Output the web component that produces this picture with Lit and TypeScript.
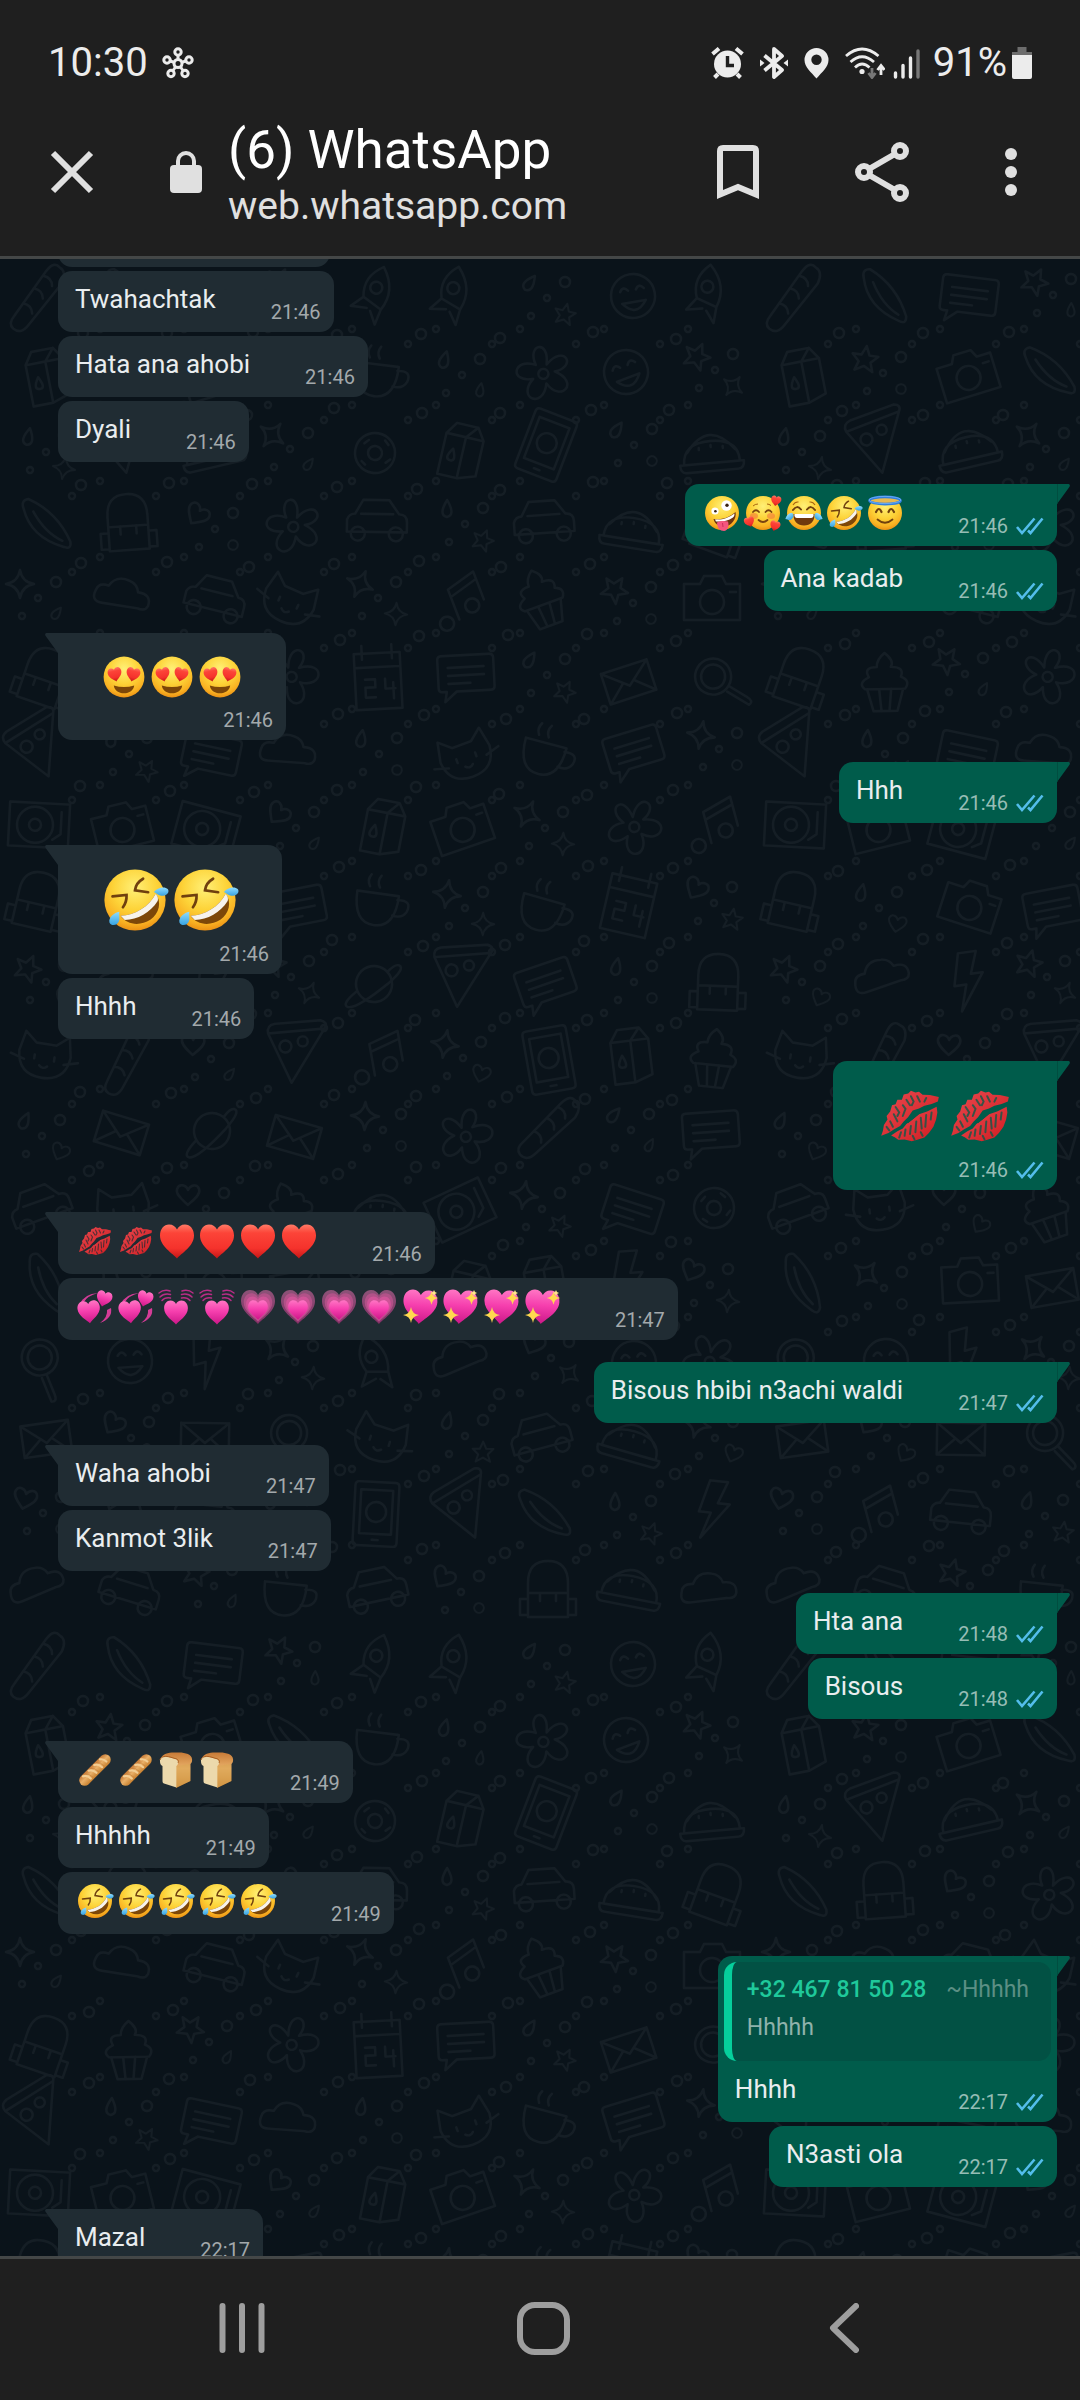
import { LitElement, html, svg, css, nothing } from "lit";
import { customElement, property } from "lit/decorators.js";
import { classMap } from "lit/directives/class-map.js";

type EmojiName =
  | "zany" | "adoring" | "joy" | "rofl" | "halo" | "heartEyes" | "kiss" | "heart"
  | "revolving" | "beating" | "growing" | "sparkling" | "baguette" | "bread";

interface Message {
  from: "in" | "out";
  time?: string;
  text?: string;
  emoji?: EmojiName[];
  size?: "medium" | "large";
  first?: boolean;
  quote?: { phone: string; name: string; text: string };
}

const times = (n: number, e: EmojiName): EmojiName[] => Array.from({ length: n }, () => e);

const MESSAGES: Message[] = [
  { from: "in" },
  { from: "in", text: "Twahachtak", time: "21:46" },
  { from: "in", text: "Hata ana ahobi", time: "21:46" },
  { from: "in", text: "Dyali", time: "21:46" },
  { from: "out", first: true, emoji: ["zany", "adoring", "joy", "rofl", "halo"], time: "21:46" },
  { from: "out", text: "Ana kadab", time: "21:46" },
  { from: "in", first: true, emoji: times(3, "heartEyes"), size: "medium", time: "21:46" },
  { from: "out", first: true, text: "Hhh", time: "21:46" },
  { from: "in", first: true, emoji: times(2, "rofl"), size: "large", time: "21:46" },
  { from: "in", text: "Hhhh", time: "21:46" },
  { from: "out", first: true, emoji: times(2, "kiss"), size: "large", time: "21:46" },
  { from: "in", first: true, emoji: [...times(2, "kiss"), ...times(4, "heart")], time: "21:46" },
  {
    from: "in",
    emoji: [...times(2, "revolving"), ...times(2, "beating"), ...times(4, "growing"), ...times(4, "sparkling")],
    time: "21:47",
  },
  { from: "out", first: true, text: "Bisous hbibi n3achi waldi", time: "21:47" },
  { from: "in", first: true, text: "Waha ahobi", time: "21:47" },
  { from: "in", text: "Kanmot 3lik", time: "21:47" },
  { from: "out", first: true, text: "Hta ana", time: "21:48" },
  { from: "out", text: "Bisous", time: "21:48" },
  { from: "in", first: true, emoji: ["baguette", "baguette", "bread", "bread"], time: "21:49" },
  { from: "in", text: "Hhhhh", time: "21:49" },
  { from: "in", emoji: times(5, "rofl"), time: "21:49" },
  {
    from: "out",
    first: true,
    quote: { phone: "+32 467 81 50 28", name: "~Hhhhh", text: "Hhhhh" },
    text: "Hhhh",
    time: "22:17",
  },
  { from: "out", text: "N3asti ola", time: "22:17" },
  { from: "in", first: true, text: "Mazal", time: "22:17" },
];

/* ---------- emoji artwork, all on a 40 x 40 box ---------- */

const HEART =
  "M0 17C-4 12-17 5-17-6C-17-12.500-13-17-8-17C-4-17-1.500-15 0-12C1.500-15 4-17 8-17C13-17 17-12.500 17-6C17 5 4 12 0 17Z";
const heartAt = (x: number, y: number, s: number, fill: string, rot = 0) =>
  svg`<path d=${HEART} fill=${fill} transform=${`translate(${x} ${y}) rotate(${rot}) scale(${s})`} />`;
const face = svg`<circle cx="20" cy="20" r="17" fill="url(#face)" />`;
const TEAR = "M-6-1C-2-4 3-5 6-2C7 1 4 4 0 4C-3 4-4 1-6-1Z";
const SPARK = "M0-8Q1-1 8 0Q1 1 0 8Q-1 1-8 0Q-1-1 0-8Z";

const EMOJI: Record<EmojiName, { label: string; art: unknown }> = {
  zany: {
    label: "zany face",
    art: svg`${face}
      <circle cx="13" cy="18" r="3.600" fill="#fff" /><circle cx="13.400" cy="18.200" r="1.300" fill="#3b2412" />
      <circle cx="24.500" cy="12.500" r="5.200" fill="#fff" /><circle cx="25" cy="12.300" r="1.700" fill="#3b2412" />
      <path d="M11.500 26C18 27.500 28 24.500 33.500 19C35 26 29 34 21 33.500C16 33 12.500 30.500 11.500 26Z" fill="#6d3410" />
      <path d="M13 26.400C19 27.300 27 25 32.500 20.500C32.500 22.500 32 23.500 31 24.500C26 28 19 29 14 28.500Z" fill="#fff" />
      <path d="M15 29.500C19 27.500 23 28 26 28.500C27.500 33 25.500 37.500 22 38C18 38 15 34.500 15 29.500Z" fill="#f4567f" />
      <path d="M20.500 30L21 34" stroke="#cf2f5c" stroke-width="1" />`,
  },
  adoring: {
    label: "smiling face with hearts",
    art: svg`${face}
      <ellipse cx="11" cy="23" rx="4" ry="3" fill="#f3703c" opacity=".55" /><ellipse cx="28" cy="23" rx="4" ry="3" fill="#f3703c" opacity=".55" />
      <path d="M10 19Q13 15.500 16 19M22.500 19Q25.500 15.500 28.500 19M15.500 27Q20 31 24.500 27" fill="none" stroke="#7a4310" stroke-width="1.800" stroke-linecap="round" />
      <path d="M10 13Q12 11 15 11M24 11Q26 11 28 12.500" fill="none" stroke="#a9640f" stroke-width="1" />
      ${heartAt(33, 8, 0.3, "url(#red)", 10)}${heartAt(6.5, 29, 0.3, "url(#red)", -20)}${heartAt(32, 33, 0.3, "url(#red)", 15)}`,
  },
  joy: {
    label: "face with tears of joy",
    art: svg`${face}
      <path d="M9 17Q13 11.500 17 16.500M23 16.500Q27 11.500 31 17" fill="none" stroke="#70400e" stroke-width="2" stroke-linecap="round" />
      <path d="M9 12Q11 8.500 14.500 9M25.500 9Q29 8.500 31 12" fill="none" stroke="#a9640f" stroke-width="1.100" />
      <path d="M9.500 21H30.500C31 28 26.500 32.500 20 32.500S9 28 9.500 21Z" fill="#70390d" />
      <path d="M10.500 21H29.500C30 23 29 25 27 25H13C11 25 10 23 10.500 21Z" fill="#fff" />
      <path d=${TEAR} fill="url(#tear)" transform="translate(5.500 24) rotate(-35) scale(.75)" />
      <path d=${TEAR} fill="url(#tear)" transform="translate(34.500 24) scale(-1 1) rotate(-35) scale(.75)" />`,
  },
  rofl: {
    label: "rolling on the floor laughing",
    art: svg`${face}
      <path d="M7.500 18L15.300 17.200Q15.500 21 13.300 24M24.500 8.200Q20.500 10.500 20 14.600L27.300 15.700" fill="none" stroke="#70400e" stroke-width="1.500" stroke-linecap="round" />
      <path d="M12 28.800C20 28.500 28 23.500 31.500 16.500C35 21 33.500 27.500 28.500 31C23 34.600 15.500 34 12 28.800Z" fill="#7d4708" />
      <path d="M12 28.800C20 28.500 28 23.500 31.500 16.500C32.800 18 33 19.300 32.600 20.500C28.500 27 21.500 30.800 14.300 31.100Z" fill="#f7f3ec" />
      <path d="M30.500 15.500C32.500 13 36.500 12.300 38.300 14C39.600 16.300 36.500 18.200 34 17.500C32.500 17 31.500 16 30.500 15.500Z" fill="url(#tear)" />
      <path d="M11.300 26.500C8.500 27 5.200 29.500 5.800 32.500C7 35 10.500 34 11.200 31.500C11.600 29.500 11 28 11.300 26.500Z" fill="url(#tear)" />`,
  },
  halo: {
    label: "smiling face with halo",
    art: svg`${face}
      <path d="M11 19Q14 13 16.500 19M23.500 19Q26 13 29 19" fill="none" stroke="#70400e" stroke-width="2.200" stroke-linecap="round" />
      <path d="M12.500 26.500Q20 33 27.500 26.500" fill="none" stroke="#70400e" stroke-width="1.800" stroke-linecap="round" />
      <ellipse cx="20" cy="7.500" rx="15.500" ry="3.600" fill="#e8b94f" stroke="#2f7fe0" stroke-width="2.600" />
      <ellipse cx="20" cy="7" rx="16" ry="3.600" fill="none" stroke="#7fbcfb" stroke-width=".7" />`,
  },
  heartEyes: {
    label: "smiling face with heart-eyes",
    art: svg`${face}
      ${heartAt(12.5, 18, 0.34, "url(#red)", -12)}${heartAt(27.5, 18, 0.34, "url(#red)", 12)}
      <path d="M11.500 27Q20 29.500 28.500 27C28 31 24.500 33.500 20 33.500S12 31 11.500 27Z" fill="#7d4708" />`,
  },
  kiss: {
    label: "kiss mark",
    art: svg`
      <path d="M4 31L5 28L5.500 25L7.500 22L7 20L9 17.500L10 14L12 13.500L13 11L15.500 11L16.500 8L19 7.500L20.500 6L23 7L25 6.500L27 8.200L31 8.300L36 9.500L35.500 12L32 13.300L28 14.300L25 15.800L21.500 17L19 20.500L16.500 23L14.500 25.500L11 27.500L8 29.500Z" fill="url(#lips)" />
      <path d="M9.500 30.800L13 28.500L16 27L18 24.500L21.500 22L25 19L29.500 17.500L34.800 14.800L35.200 18L34.500 22L33 26L30.500 29.500L28 32L24.500 33L21 34L17 33L13.500 33.200L11.500 31.800Z" fill="url(#lips)" />
      <path d="M12 15L14 18L13 20M16 20L17.500 16L16 14M13 23L11 19M20.500 9L22 12L21 14M24 9L25.500 12M29 10L28 12M18 11L20 14M9 23L10.500 26M7 26L8.500 28M15 29L14 32M17.500 27.500L17 31M20.500 25.500L20 30M23.500 23L23 29M26 21L26.500 27M29 19.500L28.500 26M32 18L31.500 22M21.500 31L22.500 33M26 29L27 31" stroke="currentColor" stroke-width="1.100" opacity=".75" fill="none" stroke-linecap="round" />
      <path d="M18.500 23.500L27 16.500L33 14" stroke="currentColor" stroke-width="1.200" fill="none" />`,
  },
  heart: { label: "red heart", art: svg`${heartAt(20, 20.5, 1, "url(#red)")}` },
  revolving: {
    label: "revolving hearts",
    art: svg`
      <path d="M5 17Q9 7 23 6Q12 9 9 15ZM36 21Q38 31 25 36Q33 30 32 23Z" fill="#d43c97" />
      ${heartAt(14, 25, 0.66, "url(#pink)", -5)}${heartAt(29, 12, 0.46, "url(#pink)", 15)}`,
  },
  beating: {
    label: "beating heart",
    art: svg`${heartAt(20, 25.5, 0.7, "url(#pink)")}
      <path d="M6 13.500Q9 10 14.500 11M4 10Q8 6 14.500 7.500M3 6Q8 2 14 4M34 13.500Q31 10 25.500 11M36 10Q32 6 25.500 7.500M37 6Q32 2 26 4" fill="none" stroke="#b82d85" stroke-width="1.500" stroke-linecap="round" />`,
  },
  growing: {
    label: "growing heart",
    art: svg`${heartAt(20, 20, 1, "url(#plum)")}
      <g opacity=".85">${heartAt(20, 20.5, 0.84, "#b8538c")}${heartAt(20, 21.5, 0.7, "#dc569f")}</g>
      ${heartAt(20, 23, 0.58, "url(#pink)")}`,
  },
  sparkling: {
    label: "sparkling heart",
    art: svg`${heartAt(20, 20, 1, "url(#pink)", 4)}
      <path d=${SPARK} fill="#ffd94f" transform="translate(11 28)" />
      <path d=${SPARK} fill="#ffd94f" transform="translate(31.500 11) scale(.85)" />
      <path d="M34 3L35 5L37 6L35 7L34 9L33 7L31 6L33 5Z" fill="#ffe98a" />`,
  },
  baguette: {
    label: "baguette",
    art: svg`<g transform="rotate(-45 20 20)">
      <rect x="0" y="14.500" width="40" height="11" rx="5.500" fill="url(#crust)" />
      <path d="M7 16Q11 18 11 23M15 16Q19 18 19 23M23 16Q27 18 27 23M31 16Q34 18 34 22" fill="none" stroke="#f3cd92" stroke-width="2.200" stroke-linecap="round" />
      <path d="M10 15.500Q13.500 18 13.500 24M18 15.500Q21.500 18 21.500 24M26 15.500Q29.500 18 29.500 24" fill="none" stroke="#b9702d" stroke-width=".8" opacity=".5" />
    </g>`,
  },
  bread: {
    label: "bread",
    art: svg`
      <path d="M5 8C7 3 14 2 21 2.500C28 2 36 4 36 9C36.500 12 35 13 34.500 14V31L20 38L20 12Z" fill="url(#crust)" />
      <path d="M4 10C4 7 8 6 12 7L18 8.500C23 9 23 14 20.500 16V37.500L8 33.500C6.500 33 6.500 32 6.500 30V16C4.500 15 3.800 13 4 10Z" fill="#ecd9ac" />
      <path d="M20.500 16V37.500L34 31V14" fill="#d9a653" opacity=".55" />
      <path d="M4 10C5 6 10 6 14 7L19 8.500C22 9 23 11 22 13" fill="none" stroke="#a95d20" stroke-width="1" />`,
  },
};

const emojiDefs = html`<svg class="defs" width="0" height="0" aria-hidden="true">
  <defs>
    <radialGradient id="face" cx=".5" cy=".3" r=".72">
      <stop offset="0" stop-color="#fff077" /><stop offset=".5" stop-color="#fdd338" />
      <stop offset=".82" stop-color="#f9b122" /><stop offset="1" stop-color="#e98b12" />
    </radialGradient>
    <linearGradient id="red" x1="0" y1="0" x2="0" y2="1">
      <stop offset="0" stop-color="#ff7a66" /><stop offset=".25" stop-color="#fc4438" />
      <stop offset=".7" stop-color="#f5322c" /><stop offset="1" stop-color="#c41717" />
    </linearGradient>
    <linearGradient id="pink" x1="0" y1="0" x2="0" y2="1">
      <stop offset="0" stop-color="#ff76c4" /><stop offset=".45" stop-color="#f63fae" /><stop offset="1" stop-color="#cc1788" />
    </linearGradient>
    <linearGradient id="plum" x1="0" y1="0" x2="0" y2="1">
      <stop offset="0" stop-color="#8c5378" /><stop offset="1" stop-color="#852f66" />
    </linearGradient>
    <linearGradient id="lips" x1="0" y1="0" x2="1" y2="1">
      <stop offset="0" stop-color="#ea4a50" /><stop offset="1" stop-color="#cf1b20" />
    </linearGradient>
    <linearGradient id="tear" x1="0" y1="0" x2="0" y2="1">
      <stop offset="0" stop-color="#8edcff" /><stop offset="1" stop-color="#38a3e0" />
    </linearGradient>
    <linearGradient id="crust" x1="0" y1="0" x2="0" y2="1">
      <stop offset="0" stop-color="#c77a37" /><stop offset=".45" stop-color="#eab169" /><stop offset="1" stop-color="#c9812f" />
    </linearGradient>
  </defs>
</svg>`;

/* ---------- wallpaper doodles, each drawn round its own origin ---------- */

const DOODLES = [
  "M-24-14H24V18H-24ZM-24-14L0 6L24-14M-24 18L-6 2M24 18L6 2",
  "M-16-14L-8-26H14L22-14V22L4 28H-16ZM-16-14H4V28M4-14L14-26M4-14H22M-6 0Q-14 12-6 12Q0 12-6 0Z",
  "M-18-32H18Q22-32 22-28V28Q22 32 18 32H-18Q-22 32-22 28V-28Q-22-32-18-32ZM-16-24H16V20H-16ZM10-2A10 10 0 1 0-10-2A10 10 0 1 0 10-2M-3 26H3",
  "M22 0A22 22 0 1 0-22 0A22 22 0 1 0 22 0M-12-6Q-8-12-4-6M4-6Q8-12 12-6M-12 6Q0 22 12 6Z",
  "M16-4A18 18 0 1 0-20-4A18 18 0 1 0 16-4M10-4A12 12 0 1 0-14-4A12 12 0 1 0 10-4M11 9L26 24Q32 30 26 32L8 14",
  "M-20 8Q-32 8-28-4Q-26-12-16-10Q-10-22 4-18Q12-16 14-8Q28-8 26 4Q24 10 16 8Z",
  "M18 0A18 18 0 1 0-18 0A18 18 0 1 0 18 0M-18 4Q-36 14-30 18Q-22 22 14 2Q34-10 28-14Q24-16 16-10",
  "M-30 22Q-34 16-26 10L16-26Q26-34 30-26Q36-20 28-10L-14 22Q-24 30-30 22ZM-14 0Q-6 4-8 12M0-12Q8-8 6 0M12-22Q20-18 18-10",
  "M-20-24Q10-14 26 14Q28 22 20 20Q-14 14-24-14Q-28-22-20-24ZM-14-12Q0 8 18 14",
  "M-8-30H10L2-8H14L-12 28L-4 2H-16Z",
  "M0-28Q10-20 6-14Q20-14 16-4Q26 0 20 8H-20Q-28 2-16-4Q-22-14-8-14Q-8-22 0-28ZM-18 8L-12 30H12L18 8M-6 8L-4 30M6 8L4 30",
  "M-30-22H30V22H-30ZM14 0A18 18 0 1 0-22 0A18 18 0 1 0 14 0M2 0A6 6 0 1 0-10 0A6 6 0 1 0 2 0M22-14V8L14 14",
  "M-28-16H-12L-8-24H10L14-16H28V20H-28ZM12 2A12 12 0 1 0-12 2A12 12 0 1 0 12 2M18-8H24",
  "M-24-26H22V30H-24ZM-16-34V-20M14-34V-20M-24-12H22M-14 0H-4V8H-14V18H-4M6 0V10H16M14 4V20",
  "M20 0A20 20 0 1 0-20 0A20 20 0 1 0 20 0M7 0A7 7 0 1 0-7 0A7 7 0 1 0 7 0M-12-8L-8-12M8-14L12-10M12 8L16 4M-12 10L-8 13",
  "M-28-20L28-28L-2 28ZM-28-20Q-30-28-22-30L24-36Q32-34 28-28M-4-8A6 6 0 1 0-16-8A6 6 0 1 0-4-8M12-14A5 5 0 1 0 2-14A5 5 0 1 0 12-14",
  "M-30 10V-2Q-28-8-22-8L-14-22H12L22-8Q30-8 30 0V10ZM-12 12A7 7 0 1 0-26 12A7 7 0 1 0-12 12M26 12A7 7 0 1 0 12 12A7 7 0 1 0 26 12M-16-8H16",
  "M-28-16Q-28-20-24-20H24Q28-20 28-16V12Q28 16 24 16H-10L-22 26L-20 16H-24Q-28 16-28 12ZM-18-8H18M-18 0H18M-18 8H4",
  "M-20 26V-8Q-20-30 0-30Q20-30 20-8V26ZM-20 2H20M-8 2V10M8 2V10M-28 8H-20V24H-28ZM20 8H28V24H20Z",
  "M0-8C10-34 30-16 10-4C38-2 26 24 6 10C12 36-18 34-8 10C-30 22-34-4-10-4C-26-20-6-34 0-8ZM5 2A5 5 0 1 0-5 2A5 5 0 1 0 5 2",
  "M-26 0L-22-20L-10-10H10L22-20L26 0Q24 24 0 24T-26 0ZM-10 2V6M10 2V6M-4 12Q0 16 4 12M-34 4L-20 8M34 4L20 8",
  "M-26-8H16Q16 24-5 24T-26-8ZM15-4Q30-6 26 6Q22 14 12 12M-14-14Q-18-20-14-26M-4-14Q-8-20-4-26",
  "M-28 12Q-28-10 0-10T28 12ZM-32 12H32Q32 20 26 20H-26Q-32 20-32 12ZM-24 0Q0-32 24 0M-12-4V-2M0-6V-4M12-4V-2",
  "M-4-30Q14-10 4 12L-16 4Q-22-16-4-30ZM-16 4L-26 16L-10 14M4 12L2 28L-6 16M0-8A6 6 0 1 0-12-8A6 6 0 1 0 0-8",
  "M-16 16A7 7 0 1 1-16 15M14 8A7 7 0 1 1 14 7M-10 16V-16L20-24V6M-10-8L20-16",
];
const SMALL = [
  "M0-14Q2-2 14 0Q2 2 0 14Q-2 2-14 0Q-2-2 0-14Z",
  "M0-13L4-4L13-4L6 3L9 12L0 7L-9 12L-6 3L-13-4L-4-4Z",
  "M0 10C-4 6-13 0-11-6C-9-12-2-10 0-5C2-10 9-12 11-6C13 0 4 6 0 10Z",
  "M0-10Q-9 5 0 7Q9 5 0-10Z",
  "M6 0A6 6 0 1 0-6 0A6 6 0 1 0 6 0",
];
const DOT = "M3 0A3 3 0 1 0-3 0A3 3 0 1 0 3 0";
const RING = "M5 0A5 5 0 1 0-5 0A5 5 0 1 0 5 0";

const TILE_W = 756;
const TILE_H = 1368;

function scatter() {
  let seed = 7;
  const rnd = () => {
    seed = (seed * 16807) % 2147483647;
    return seed / 2147483647;
  };
  const cols = 9;
  const rows = 18;
  const w = TILE_W / cols;
  const h = TILE_H / rows;
  const out: unknown[] = [];
  const put = (d: string, x: number, y: number, r: number, s = 1) =>
    out.push(svg`<path d=${d} transform=${`translate(${Math.round(x)} ${Math.round(y)}) rotate(${Math.round(r)}) scale(${s})`} />`);
  for (let j = 0; j < rows; j++) {
    for (let i = 0; i < cols; i++) {
      const cx = (i + 0.5) * w + (rnd() - 0.5) * 10;
      const cy = (j + 0.5) * h + (rnd() - 0.5) * 8;
      if ((i * 2 + j * 3) % 7 < 5) {
        put(DOODLES[Math.floor(rnd() * DOODLES.length)], cx, cy, (rnd() - 0.5) * 50, 1);
      } else {
        put(SMALL[Math.floor(rnd() * 4)], cx - 18, cy - 14, rnd() * 40);
        put(SMALL[Math.floor(rnd() * 5)], cx + 18, cy + 16, rnd() * 40, 0.8);
        put(RING, cx + 18, cy - 16, 0);
        put(DOT, cx - 16, cy + 18, 0);
        put(DOT, cx, cy, 0);
      }
      const ex = i * w;
      const ey = j * h;
      if (ex > 8 && ey > 8) {
        put(RING, ex + (rnd() - 0.5) * 10, ey + (rnd() - 0.5) * 10, 0);
        put(DOT, ex + 16, ey - 6, 0);
        put(DOT, ex - 12, ey + 9, 0);
      }
    }
  }
  return out;
}

const wallpaper = html`<svg class="wallpaper" aria-hidden="true">
  <defs>
    <pattern id="doodles" width=${TILE_W} height=${TILE_H} patternUnits="userSpaceOnUse">
      <g fill="none" stroke="#151e25" stroke-width="2.400" stroke-linejoin="round" stroke-linecap="round">${scatter()}</g>
    </pattern>
  </defs>
  <rect width="100%" height="100%" fill="url(#doodles)" />
</svg>`;

/* ---------- interface icons ---------- */

const hubIcon = html`<svg width="32" height="32" viewBox="0 0 32 32" role="img" aria-label="Hub">
  <g fill="none" stroke="#ececec" stroke-width="3">
    <circle cx="16" cy="16.500" r="4" /><circle cx="16" cy="5" r="3.200" /><circle cx="27" cy="13" r="3.200" />
    <circle cx="23" cy="26.500" r="3.200" /><circle cx="9" cy="26.500" r="3.200" /><circle cx="5" cy="13" r="3.200" />
    <path d="M16 8.500V12M23.500 14L20 15.300M21 23.500L18.500 20M11 23.500L13.500 20M8.500 14L12 15.300" />
  </g>
</svg>`;

const statusIcons = html`
  <svg width="33" height="32" viewBox="0 0 33 32" role="img" aria-label="Alarm">
    <path d="M1.500 7L8 1.500M31.500 7L25 1.500M7 27L3.500 30.500M26 27L29.500 30.500" stroke="#ececec" stroke-width="4" />
    <circle cx="16.500" cy="17" r="13.500" fill="#ececec" />
    <path d="M16.500 9V18.500H23" fill="none" stroke="#1f1f1f" stroke-width="3.400" />
  </svg>
  <svg width="28" height="32" viewBox="0 0 28 32" role="img" aria-label="Bluetooth">
    <path d="M4.500 8.500L22 23L14 30V2L22 9L4.500 23.500" fill="none" stroke="#ececec" stroke-width="3.800" stroke-linejoin="round" />
    <path d="M0 12.500L4.500 16L0 19.500ZM28 12.500L23.500 16L28 19.500Z" fill="#ececec" />
  </svg>
  <svg width="25" height="32" viewBox="0 0 25 32" role="img" aria-label="Location">
    <path fill-rule="evenodd" d="M12.500 1A12 12 0 0 0 .5 13C.5 20 7 25 12.500 31.500C18 25 24.500 20 24.500 13A12 12 0 0 0 12.500 1ZM12.500 7.500A5.200 5.200 0 1 1 12.500 17.900A5.200 5.200 0 1 1 12.500 7.500Z" fill="#ececec" />
  </svg>
  <svg width="40" height="32" viewBox="0 0 40 32" role="img" aria-label="Wi-Fi">
    <path d="M1 9Q17-5 33.500 9M5.500 15Q17 4.500 29 15M10 20.500Q17 13.500 24.500 20.500" fill="none" stroke="#ececec" stroke-width="2.800" />
    <circle cx="17" cy="24.500" r="2.600" fill="#ececec" />
    <path d="M27 21V29M23.500 26L27 30.500L30.500 26" fill="none" stroke="#777" stroke-width="2.800" />
    <path d="M36 28V20M32.500 23L36 18.500L39.500 23" fill="none" stroke="#ececec" stroke-width="2.800" />
  </svg>
  <svg width="28" height="32" viewBox="0 0 28 32" role="img" aria-label="Signal">
    <path d="M2.500 26V30M10 18.500V30M17.500 11V30" stroke="#ececec" stroke-width="3.400" stroke-linecap="round" />
    <path d="M25 4V30" stroke="#777" stroke-width="3.400" stroke-linecap="round" />
  </svg>`;

const batteryIcon = html`<svg width="20" height="32" viewBox="0 0 20 32" role="img" aria-label="Battery">
  <path d="M5.500 0H14.500V5H20V8H0V5H5.500Z" fill="#6d6d6d" /><path d="M0 8H20V30Q20 32 18 32H2Q0 32 0 30Z" fill="#ececec" />
</svg>`;

const ticks = html`<svg class="ticks" width="28" height="18" viewBox="0 0 28 18" role="img" aria-label="Read">
  <path d="M1 10L6 16L18.500 1.500M12 13.500L14.500 16L26.500 1.500" fill="none" stroke="#53bdeb" stroke-width="2.600" />
</svg>`;

@customElement("chat-bubble")
export class ChatBubble extends LitElement {
  @property({ attribute: false }) message!: Message;

  static styles = css`
    :host { display: block; }
    .defs { position: absolute; }
    .bubble {
      position: relative;
      box-sizing: border-box;
      min-height: 61px;
      border-radius: 14px;
      background: #202c33;
      color: #e9edef;
      --meta: #a3a9ac;
    }
    .bubble.out { background: #005c4b; --meta: #96bdb5; }
    .bubble.tail.in { border-top-left-radius: 0; }
    .bubble.tail.out { border-top-right-radius: 0; }
    .bubble.blank { width: 272px; }
    .tail-shape { position: absolute; top: 0; display: block; }
    .in .tail-shape { right: 100%; }
    .out .tail-shape { left: 100%; }
    .body { display: flex; align-items: flex-end; gap: 55px; padding: 11px 13px 6px 17px; }
    .body.pictures { gap: 53px; }
    .quoted .body { justify-content: space-between; }
    .text { margin: 0 0 9px; font-size: 26px; line-height: 35px; white-space: nowrap; }
    .emoji { display: flex; align-items: center; height: 36px; margin-bottom: 9px; }
    .cell { flex: 1 1 0; min-width: 0; display: flex; justify-content: center; }
    .cell svg { flex: none; display: block; width: 40px; height: 40px; }
    .in .cell { color: #202c33; }
    .out .cell { color: #005c4b; }
    .meta { display: flex; align-items: center; gap: 8px; color: var(--meta); font-size: 20px; line-height: 28px; }
    .ticks { display: block; }
    .body.big { flex-direction: column; gap: 5px; padding-top: 20px; }
    .big .emoji { align-self: center; height: 48px; margin: 0 29px 0 25px; }
    .big .cell { flex: none; width: 48px; }
    .big .cell svg { width: 48px; height: 48px; }
    .big.large .emoji { height: 70px; }
    .big.large .cell { width: 70px; }
    .big.large .cell svg { width: 72px; height: 72px; }
    .quote-wrap { padding: 6px 6px 0; }
    .quote {
      margin: 0;
      height: 99px;
      box-sizing: border-box;
      padding: 9px 22px 0 15px;
      border-left: 8px solid #06cf9c;
      border-radius: 13px;
      background: #025144;
      font-size: 23px;
      line-height: 38px;
      color: #8fb2ab;
      white-space: nowrap;
    }
    .quote p { margin: 0; }
    .who { display: flex; gap: 20px; }
    .phone { color: #1fc99b; font-weight: 500; }
    .name { color: #5c8f84; }
  `;

  render() {
    const m = this.message;
    const bubble = { bubble: true, in: m.from === "in", out: m.from === "out", tail: !!m.first, blank: !m.time, quoted: !!m.quote };
    const body = { body: true, pictures: !!m.emoji, big: !!m.size, large: m.size === "large" };
    return html`${m.emoji ? emojiDefs : nothing}
      <div class=${classMap(bubble)}>
        ${m.first ? this.tail() : nothing}
        ${m.quote
          ? html`<div class="quote-wrap"><blockquote class="quote">
              <p class="who"><span class="phone">${m.quote.phone}</span><span class="name">${m.quote.name}</span></p>
              <p>${m.quote.text}</p>
            </blockquote></div>`
          : nothing}
        ${m.time
          ? html`<div class=${classMap(body)}>
              ${m.emoji ? this.emojiRow(m.emoji, !!m.size) : html`<p class="text">${m.text}</p>`}
              <div class="meta"><time>${m.time}</time>${m.from === "out" ? ticks : nothing}</div>
            </div>`
          : nothing}
      </div>`;
  }

  private emojiRow(names: EmojiName[], big: boolean) {
    const cells = names.map(
      (n) => html`<span class="cell"><svg viewBox="0 0 40 40" role="img" aria-label=${EMOJI[n].label}>${EMOJI[n].art}</svg></span>`,
    );
    return big
      ? html`<div class="emoji">${cells}</div>`
      : html`<div class="emoji" style=${`width:${Math.round(names.length * 40.6)}px`}>${cells}</div>`;
  }

  private tail() {
    return this.message.from === "in"
      ? html`<svg class="tail-shape" width="13" height="20" viewBox="0 0 13 20" aria-hidden="true">
          <path d="M13 0H2C0 0-.5 1.500 1 3.500L13 20Z" fill="#202c33" />
        </svg>`
      : html`<svg class="tail-shape" width="13" height="20" viewBox="0 0 13 20" aria-hidden="true">
          <path d="M0 0H11C13 0 13.500 1.500 12 3.500L0 20Z" fill="#005c4b" /><path d="M.5 0V20" stroke="#034539" opacity=".6" />
        </svg>`;
  }
}

@customElement("app-root")
export class AppRoot extends LitElement {
  static styles = css`
    :host { display: block; font-family: Roboto, "Noto Sans", sans-serif; }
    .screen { display: flex; flex-direction: column; height: 100vh; background: #1f1f1f; overflow: hidden; }
    .status { display: flex; align-items: center; padding: 39px 48px 0; color: #ececec; font-size: 40px; line-height: 48px; }
    .status svg { display: block; flex: none; }
    .clock { margin-right: 14px; }
    .icons { display: flex; align-items: center; gap: 16px; margin-left: auto; }
    .icons svg:last-child { margin-left: -8px; }
    .percent { margin: 0 5px 0 12px; }
    .toolbar { display: flex; align-items: center; height: 169px; padding: 0 12px 0 36px; border-bottom: 3px solid #444747; }
    button { display: flex; align-items: center; justify-content: center; padding: 0; border: 0; background: none; cursor: pointer; }
    .close { width: 72px; height: 96px; }
    .wide { width: 144px; height: 96px; }
    .menu { width: 114px; height: 96px; }
    .lock { display: block; flex: none; margin: 0 26px 0 62px; }
    .page { flex: 1 1 0; min-width: 0; padding-top: 9px; white-space: nowrap; }
    .title { margin: 0; font-size: 53px; line-height: 60px; font-weight: 400; color: #fff; }
    .url { margin: 0; font-size: 39px; line-height: 53px; color: #e0e0e0; }
    .chat { position: relative; flex: 1 1 0; min-height: 0; background: #0a131a; }
    .wallpaper { position: absolute; inset: 0; width: 100%; height: 100%; }
    .messages {
      position: relative;
      box-sizing: border-box;
      height: 100%;
      margin: 0;
      padding: 0 23px 24px 58px;
      list-style: none;
      display: flex;
      flex-direction: column;
      overflow-x: hidden;
      overflow-y: auto;
      scrollbar-width: none;
    }
    .row { flex: none; margin-top: 4px; }
    .row:first-child { margin-top: 0; }
    .row.first { margin-top: 22px; }
    .row.in { align-self: flex-start; }
    .row.out { align-self: flex-end; }
    .nav {
      display: grid;
      grid-template-columns: repeat(3, 28%);
      justify-content: center;
      align-items: center;
      height: 138px;
      padding: 0 0 3px 6px;
      border-top: 3px solid #444747;
    }
    .nav button { height: 96px; }
  `;

  firstUpdated() {
    const list = this.renderRoot.querySelector(".messages") as HTMLElement;
    const rows = Array.from(list.querySelectorAll("chat-bubble")) as ChatBubble[];
    Promise.all(rows.map((r) => r.updateComplete)).then(() => {
      list.scrollTop = 53;
    });
  }

  render() {
    return html`<div class="screen">
      <div class="status">
        <span class="clock">10:30</span>${hubIcon}
        <div class="icons">${statusIcons}</div>
        <span class="percent">91%</span>${batteryIcon}
      </div>
      <header class="toolbar">
        <button class="close" aria-label="Close">
          <svg width="44" height="44" viewBox="0 0 44 44"><path d="M3 3L41 41M41 3L3 41" stroke="#e0e0e0" stroke-width="6" /></svg>
        </button>
        <svg class="lock" width="32" height="42" viewBox="0 0 32 42" role="img" aria-label="Secure">
          <path d="M8 16V10A8 8 0 0 1 24 10V16" fill="none" stroke="#e0e0e0" stroke-width="4" />
          <rect y="14" width="32" height="28" rx="4" fill="#e0e0e0" />
        </svg>
        <div class="page">
          <h1 class="title">(6) WhatsApp</h1>
          <p class="url">web.whatsapp.com</p>
        </div>
        <button class="wide" aria-label="Bookmark">
          <svg width="42" height="54" viewBox="0 0 42 54"><path d="M3 49.500V6Q3 3 6 3H36Q39 3 39 6V49.500L21 42Z" fill="none" stroke="#e0e0e0" stroke-width="6" /></svg>
        </button>
        <button class="wide" aria-label="Share">
          <svg width="54" height="60" viewBox="0 0 54 60">
            <g fill="none" stroke="#e0e0e0" stroke-width="6">
              <circle cx="45" cy="9" r="6" /><circle cx="9" cy="30" r="6" /><circle cx="45" cy="51" r="6" />
              <path d="M14 27L40 12M14 33L40 48" />
            </g>
          </svg>
        </button>
        <button class="menu" aria-label="More options">
          <svg width="12" height="48" viewBox="0 0 12 48"><g fill="#e0e0e0"><circle cx="6" cy="6" r="6" /><circle cx="6" cy="24" r="6" /><circle cx="6" cy="42" r="6" /></g></svg>
        </button>
      </header>
      <main class="chat">
        ${wallpaper}
        <ol class="messages">
          ${MESSAGES.map(
            (m) => html`<li class=${classMap({ row: true, first: !!m.first, in: m.from === "in", out: m.from === "out" })}>
              <chat-bubble .message=${m}></chat-bubble>
            </li>`,
          )}
        </ol>
      </main>
      <nav class="nav" aria-label="System">
        <button aria-label="Recents">
          <svg width="46" height="50" viewBox="0 0 46 50"><path d="M3.500 3V47M23 3V47M42.500 3V47" stroke="#9e9e9e" stroke-width="6" stroke-linecap="round" /></svg>
        </button>
        <button aria-label="Home">
          <svg width="53" height="53" viewBox="0 0 53 53"><rect x="3" y="3" width="47" height="47" rx="15" fill="none" stroke="#9e9e9e" stroke-width="6" /></svg>
        </button>
        <button aria-label="Back">
          <svg width="30" height="50" viewBox="0 0 30 50"><path d="M27 3L4 25L27 47" fill="none" stroke="#9e9e9e" stroke-width="6" stroke-linecap="round" stroke-linejoin="round" /></svg>
        </button>
      </nav>
    </div>`;
  }
}
